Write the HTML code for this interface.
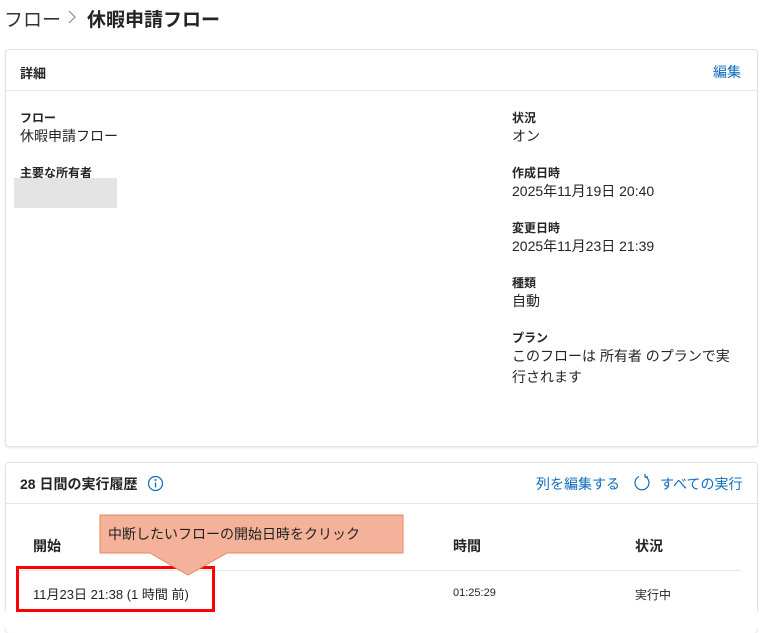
<!DOCTYPE html><html><head><meta charset="utf-8"><style>
body{margin:0;width:778px;height:629px;background:#fff;font-family:"Liberation Sans","Noto Sans CJK JP",sans-serif;color:#242424;position:relative;overflow:hidden}
.a{position:absolute;white-space:nowrap}
.card{position:absolute;left:5px;width:751px;border:1px solid #e3e3e3;border-radius:4px;box-shadow:0 1px 2px rgba(0,0,0,.08);background:#fff}
.b{font-weight:bold}
.l{font-size:12px;font-weight:bold}
.v{font-size:14px}
.blue{color:#0f6cbd}
</style></head><body>
<div class="a" style="left:4px;top:5px;font-size:19px;color:#333">フロー</div>
<svg class="a" style="left:67px;top:10px" width="10" height="14"><path d="M2 1l6 6-6 6" fill="none" stroke="#888" stroke-width="1.2"/></svg>
<div class="a b" style="left:87px;top:5px;font-size:19px">休暇申請フロー</div>
<div class="card" style="top:49px;height:396px">
 <div style="height:40px;border-bottom:1px solid #e6e6e6"></div>
</div>
<div class="a l" style="left:20px;top:63px;font-size:13px">詳細</div>
<div class="a blue" style="left:713px;top:62px;font-size:14px">編集</div>
<div class="a l" style="left:20px;top:109px">フロー</div>
<div class="a v" style="left:20px;top:126px">休暇申請フロー</div>
<div class="a l" style="left:20px;top:164px">主要な所有者</div>
<div class="a" style="left:14px;top:178px;width:103px;height:30px;background:#e4e4e4"></div>
<div class="a l" style="left:512px;top:109px">状況</div>
<div class="a v" style="left:512px;top:126px">オン</div>
<div class="a l" style="left:512px;top:164px">作成日時</div>
<div class="a v" style="left:512px;top:181px">2025年11月19日 20:40</div>
<div class="a l" style="left:512px;top:219px">変更日時</div>
<div class="a v" style="left:512px;top:236px">2025年11月23日 21:39</div>
<div class="a l" style="left:512px;top:274px">種類</div>
<div class="a v" style="left:512px;top:291px">自動</div>
<div class="a l" style="left:512px;top:329px">プラン</div>
<div class="a v" style="left:512px;top:346px;line-height:21px;white-space:normal;width:225px">このフローは 所有者 のプランで実行されます</div>
<div class="card" style="top:462px;height:170px;border-bottom:none">
 <div style="height:40px;border-bottom:1px solid #e6e6e6"></div>
</div>
<div class="a" style="left:0;top:612px;width:778px;height:17px;background:#fff"></div>
<div class="a b" style="left:20px;top:474px;font-size:14px">28 日間の実行履歴</div>
<svg class="a" style="left:147px;top:475px" width="17" height="17"><circle cx="8.5" cy="8.5" r="7" fill="none" stroke="#0f6cbd" stroke-width="1.2"/><circle cx="8.5" cy="5" r="1" fill="#0f6cbd"/><path d="M8.5 7.5v5" stroke="#0f6cbd" stroke-width="1.3"/></svg>
<div class="a blue" style="left:536px;top:474px;font-size:14px">列を編集する</div>
<svg class="a" style="left:633px;top:473px" width="18" height="20"><path d="M12 3.5A7 7 0 1 1 6 3.5" fill="none" stroke="#0f6cbd" stroke-width="1.2"/><path d="M12 1v3h3" fill="none" stroke="#0f6cbd" stroke-width="1.2"/></svg>
<div class="a blue" style="left:660px;top:474px;font-size:14px">すべての実行</div>
<div class="a b" style="left:33px;top:536px;font-size:14px">開始</div>
<div class="a b" style="left:453px;top:536px;font-size:14px">時間</div>
<div class="a b" style="left:635px;top:536px;font-size:14px">状況</div>
<div class="a" style="left:20px;top:570px;width:721px;height:1px;background:#e6e6e6"></div>
<div class="a" style="left:33px;top:584px;font-size:13px">11月23日 21:38 (1 時間 前)</div>
<div class="a" style="left:453px;top:587px;font-size:11px">01:25:29</div>
<div class="a" style="left:635px;top:586px;font-size:12px">実行中</div>
<div class="a" style="left:16px;top:566px;width:193px;height:40px;border:3px solid #f00"></div>
<svg class="a" style="left:99px;top:514px" width="306" height="64"><path d="M1 1H304V39H128L89 61L51 39H1Z" fill="#f5b29a" stroke="#e8875e" stroke-width="1"/></svg>
<div class="a" style="left:108px;top:524px;font-size:14px;color:#222">中断したいフローの開始日時をクリック</div>
</body></html>
